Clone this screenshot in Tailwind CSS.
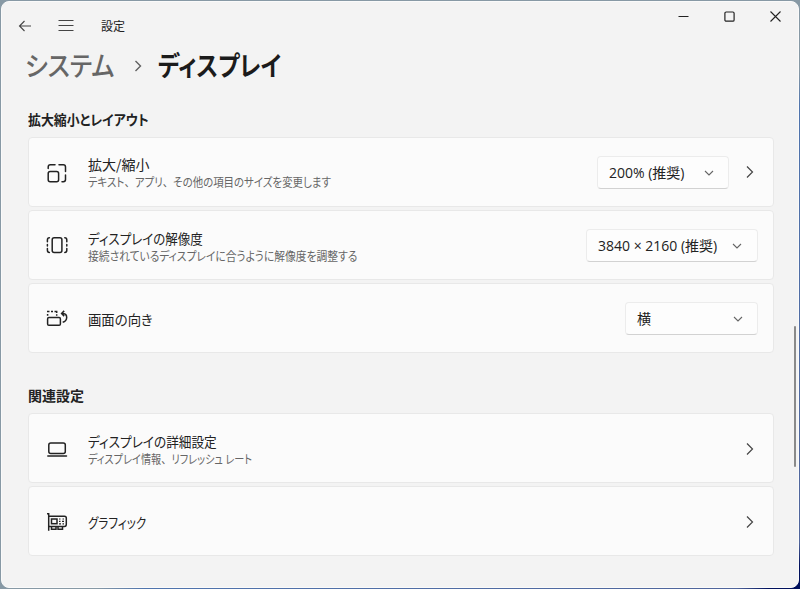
<!DOCTYPE html>
<html lang="ja">

<head>
    <meta charset="utf-8">
    <title>設定</title>
    <meta content="width=device-width, initial-scale=1.0" name="viewport">

    <!-- Tailwind CSS -->
    <script src="https://cdn.jsdelivr.net/npm/@tailwindcss/browser@4"></script>
</head>

<body class="w-[800px] h-[589px] overflow-hidden p-px bg-[linear-gradient(to_bottom_right,#8799a5_56%,#4f74ad_59%,#50659b_96%,#00105c_98%)] font-['Noto_Sans_CJK_JP',sans-serif] text-[#222] whitespace-nowrap">

    <!-- Window Start -->
    <div class="relative w-[798px] h-[587px] rounded-lg border border-[#fafafa] bg-[#f3f3f3] overflow-hidden">

        <!-- Title Bar Start -->
        <header class="flex h-[45px]">
            <div class="flex items-center pl-4 pt-[3px]">
                <svg class="w-3.5 h-3.5" viewBox="0 0 14 14" fill="none" stroke="#444" stroke-width="1.1"><path d="M6.5 2 1.5 7l5 5M1.5 7H13" /></svg>
                <svg class="w-4 h-3.5 ml-[26px]" viewBox="0 0 16 14" fill="none" stroke="#444" stroke-width="1.1"><path d="M.5 1.5h15M.5 6.5h15M.5 11.5h15" /></svg>
                <h1 class="ml-[27px] text-[12px] leading-4">設定</h1>
            </div>
            <div class="flex items-start ml-auto pt-[9px] pr-[17px] gap-[35px]">
                <svg class="w-[11px] h-3" viewBox="0 0 11 12" fill="none" stroke="#222" stroke-width="1.1"><path d="M.5 5.500h10" /></svg>
                <svg class="w-[11px] h-3" viewBox="0 0 11 12" fill="none" stroke="#222" stroke-width="1.2"><rect x=".9" y="1" width="9.2" height="9.2" rx="1.3" /></svg>
                <svg class="w-[11px] h-3" viewBox="0 0 11 12" fill="none" stroke="#222" stroke-width="1.1"><path d="m.5.5 10 10M10.5.5l-10 10" /></svg>
            </div>
        </header>
        <!-- Title Bar End -->

        <!-- Breadcrumb Start -->
        <nav class="flex items-center h-9 pl-[23px] text-[27px] leading-9 [font-feature-settings:'palt']">
            <div class="w-[91px]"><span class="inline-block origin-left scale-x-[0.91] font-medium text-[#666]">システム</span></div>
            <svg class="w-2 h-3 ml-[18px] mt-0.5" viewBox="0 0 8 12" fill="none" stroke="#606060" stroke-width="1.4"><path d="m1.500 1 5 5-5 5" /></svg>
            <span class="inline-block ml-4 origin-left scale-x-[0.85] font-bold text-[#1b1b1b]">ディスプレイ</span>
        </nav>
        <!-- Breadcrumb End -->

        <main class="pl-[26px] pr-6 [font-feature-settings:'palt']">
            <!-- Scale & Layout Start -->
            <h2 class="flex h-[54px] pt-[26px] text-[14px] leading-5 font-bold"><span class="inline-block origin-left scale-x-[0.92]">拡大縮小とレイアウト</span></h2>
            <div class="flex flex-col gap-[3px]">
                <div class="flex items-center h-[70px] pl-4 pr-[19px] rounded border border-[#e8e8e8] bg-[#fbfbfb]">
                    <svg class="w-6 h-6 mt-0.5" viewBox="0 0 24 24" fill="none" stroke="#222" stroke-width="1.5" stroke-linecap="round"><rect x="3.2" y="10.400" width="10.4" height="10.300" rx="2" /><path d="M3.200 7.500V6q0-2.200 2.200-2.200H10M14 3.800h4.300q2.200 0 2.200 2.200v4.500M20.500 14v4.500q0 2.200-2.200 2.200H17" /></svg>
                    <div class="flex flex-col ml-[19px] pt-0.5">
                        <p class="text-[14px] leading-[17px]">拡大/縮小</p>
                        <p class="text-[12px] leading-[17px] text-[#666]"><span class="inline-block origin-left scale-x-[0.87]">テキスト<span class="[font-feature-settings:normal]">、</span>アプリ<span class="[font-feature-settings:normal]">、</span>その他の項目のサイズを変更します</span></p>
                    </div>
                    <button class="flex items-center ml-auto mt-px w-[132px] h-[33px] pl-[11px] pr-[14px] rounded border border-[#ececec] border-b-[#d2d2d2] bg-[#fdfdfd] text-[14px] font-['Open_Sans','Noto_Sans_CJK_JP',sans-serif]">
                        <span>200% (推奨)</span>
                        <svg class="w-2.5 h-2.5 ml-auto" viewBox="0 0 10 10" fill="none" stroke="#666" stroke-width="1.1"><path d="m1 3 4 4 4-4" /></svg>
                    </button>
                    <svg class="w-2 h-3.5 ml-[17px]" viewBox="0 0 8 14" fill="none" stroke="#444" stroke-width="1.2"><path d="m1 1.500 5.500 5.500L1 12.500" /></svg>
                </div>
                <div class="flex items-center h-[70px] pl-4 pr-[15px] rounded border border-[#e8e8e8] bg-[#fbfbfb]">
                    <svg class="w-6 h-6" viewBox="0 0 24 24" fill="none" stroke="#222" stroke-width="1.5" stroke-linecap="round"><rect x="7.200" y="4.700" width="9.700" height="14.800" rx="2" /><path d="M4.400 4.700q-2 0-2 2.200v1.800M2.400 11.500v1.500M2.400 15.600v1.700q0 2.200 2 2.200M19.800 4.700q2 0 2 2.200v1.800M21.800 11.500v1.500M21.800 15.600v1.700q0 2.200-2 2.200" /></svg>
                    <div class="flex flex-col ml-[19px] pt-[3px]">
                        <p class="text-[14px] leading-[17px]"><span class="inline-block origin-left scale-x-[0.892]">ディスプレイの解像度</span></p>
                        <p class="text-[12px] leading-[17px] text-[#666]"><span class="inline-block origin-left scale-x-[0.897]">接続されているディスプレイに合うように解像度を調整する</span></p>
                    </div>
                    <button class="flex items-center ml-auto mt-px w-[172px] h-[33px] pl-[11px] pr-[15px] rounded border border-[#ececec] border-b-[#d2d2d2] bg-[#fdfdfd] text-[14px] font-['Open_Sans','Noto_Sans_CJK_JP',sans-serif]">
                        <span>3840 × 2160 (推奨)</span>
                        <svg class="w-2.5 h-2.5 ml-auto" viewBox="0 0 10 10" fill="none" stroke="#666" stroke-width="1.1"><path d="m1 3 4 4 4-4" /></svg>
                    </button>
                </div>
                <div class="flex items-center h-[70px] pl-4 pr-[15px] rounded border border-[#e8e8e8] bg-[#fbfbfb]">
                    <svg class="w-6 h-6" viewBox="0 0 24 24" fill="none" stroke="#222" stroke-width="1.5"><rect x="2.600" y="11.600" width="12.800" height="7.600" rx="1.300" /><path d="M2.600 9.800V8M2 5.500h2.500M6 5.500h2M9.500 5.500h2.200V7M11.700 8.200v1.600M16.600 7.500h1.500q3.600.3 3.600 4-.2 3.800-4 4.800M19.200 4.900 16.600 7.500 19.200 10.100" /></svg>
                    <p class="ml-[19px] pt-px text-[14px] leading-[18px]"><span class="inline-block origin-left scale-x-[0.955]">画面の向き</span></p>
                    <button class="flex items-center ml-auto mt-px w-[133px] h-[33px] pl-[11px] pr-[14px] rounded border border-[#ececec] border-b-[#d2d2d2] bg-[#fdfdfd] text-[14px]">
                        <span>横</span>
                        <svg class="w-2.5 h-2.5 ml-auto" viewBox="0 0 10 10" fill="none" stroke="#666" stroke-width="1.1"><path d="m1 3 4 4 4-4" /></svg>
                    </button>
                </div>
            </div>
            <!-- Scale & Layout End -->

            <!-- Related Settings Start -->
            <h2 class="flex h-[60px] pt-8 text-[14px] leading-5 font-bold">関連設定</h2>
            <div class="flex flex-col gap-[3px]">
                <div class="flex items-center h-[70px] pl-4 pr-[19px] rounded border border-[#e8e8e8] bg-[#fbfbfb]">
                    <svg class="w-6 h-6 mt-0.5" viewBox="0 0 24 24" fill="none" stroke="#222" stroke-width="1.5"><rect x="3.800" y="6" width="16.500" height="10.500" rx="2" /><path d="M2.800 18.900h18.700" stroke-linecap="round" /></svg>
                    <div class="flex flex-col ml-[19px] pt-[3px]">
                        <p class="text-[14px] leading-[17px]"><span class="inline-block origin-left scale-x-[0.903]">ディスプレイの詳細設定</span></p>
                        <p class="text-[12px] leading-[17px] text-[#666]"><span class="inline-block origin-left scale-x-[0.845]">ディスプレイ情報<span class="[font-feature-settings:normal]">、</span>リフレッシュ レート</span></p>
                    </div>
                    <svg class="w-2 h-3.5 ml-auto mt-px" viewBox="0 0 8 14" fill="none" stroke="#444" stroke-width="1.2"><path d="m1 1.500 5.500 5.500L1 12.500" /></svg>
                </div>
                <div class="flex items-center h-[70px] pl-4 pr-[19px] rounded border border-[#e8e8e8] bg-[#fbfbfb]">
                    <svg class="w-6 h-6 mt-0.5" viewBox="0 0 24 24" fill="none" stroke="#222" stroke-width="1.5"><path d="M2 3.700h1.700v17M3.700 6.300h15.800q1.800 0 1.800 1.800v6.500q0 1.800-1.800 1.800H3.700M6.500 16.400v2.800h4.500v-2.800M13 16.400v2.800h4.500v-2.800" /><rect x="6.500" y="9" width="5.500" height="4.700" /><path stroke-width="1.200" d="M14 9h1.500M17.500 9h1.500M14 11.400h1.500M17 11.400h2M14 13.800h2M17.500 13.800h1.500" /></svg>
                    <p class="ml-[19px] pt-0.5 text-[14px] leading-[18px]"><span class="inline-block origin-left scale-x-[0.825]">グラフィック</span></p>
                    <svg class="w-2 h-3.5 ml-auto mt-0.5" viewBox="0 0 8 14" fill="none" stroke="#444" stroke-width="1.2"><path d="m1 1.500 5.500 5.500L1 12.500" /></svg>
                </div>
            </div>
            <!-- Related Settings End -->
        </main>

        <!-- Scrollbar -->
        <div class="absolute right-[2px] top-[324px] w-0.5 h-[141px] rounded-full bg-[#8a8a8a]"></div>
    </div>
    <!-- Window End -->
</body>

</html>
